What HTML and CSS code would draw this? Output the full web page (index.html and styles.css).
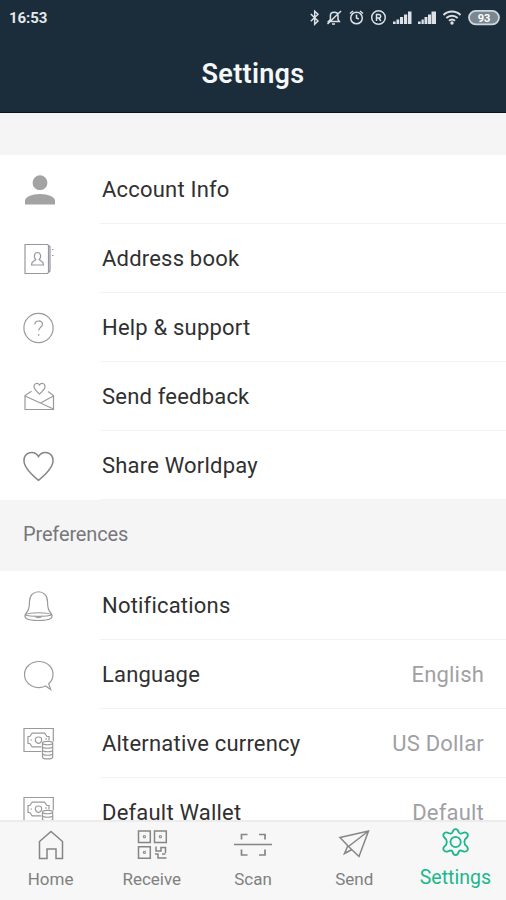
FILE: index.html
```html
<!DOCTYPE html>
<html lang="en">
<head>
<meta charset="utf-8">
<title>Settings</title>
<link rel="stylesheet" href="styles.css">
</head>
<body>
<svg class="defs" aria-hidden="true">
  <symbol id="money" viewBox="0 0 37 37">
    <path d="M21.5 26.500H4v-23h29.300v13M8 15v-3.500h1.800l2.400-3.300h12.400l2.400 3.300H29v4M8 15v3.500h1.800l2.400 3.300h9.300"/>
    <path d="M18.500 12c-2.400 0-3.500 1.300-3.100 3.300.4 1.900 1.600 3 3.100 3s2.700-1.100 3.100-3c.4-2-.7-3.300-3.100-3.300zM10.500 15h1.500M25 14h2"/>
    <path d="M22.500 18v14c0 2.600 10.200 2.600 10.200 0V18c0-2.300-10.200-2.300-10.200 0 0 2.300 10.200 2.300 10.200 0M22.500 21.500c0 2.300 10.200 2.300 10.200 0M22.500 25c0 2.300 10.200 2.300 10.200 0M22.500 28.500c0 2.300 10.200 2.300 10.200 0"/>
  </symbol>
</svg>
<div class="screen">
  <header class="header">
    <div class="status">
      <span class="time">16:53</span>
      <svg class="status-icons" width="194" height="20" viewBox="306 8 194 20">
        <g fill="none" stroke="#dbe1e6" stroke-width="1.500">
          <path d="M310.800 14l7.200 7-3.300 3.300V11.200l3.300 3-7.200 7"/>
          <path d="M328.500 21.500h10.800l-1.300-2v-3.800c0-4.600-7.600-4.600-7.600 0v3.800zM332 24h3M327.500 24l13.500-13"/>
          <circle cx="356.500" cy="18" r="5.800"/><path d="M356.500 14.500V18l2.300 1M350 13.500l3-2.500M363 13.500l-3-2.500"/>
          <circle cx="378.500" cy="17.500" r="6.800"/><path d="M376.500 21v-6.500h2.500c2.300 0 2.300 3.500 0 3.500h-2.500m2.300 0l2 3"/>
          <path stroke-width="1.900" d="M443.500 15c4.800-4.600 12.200-4.600 17 0M446.300 18c3.300-3 8.100-3 11.400 0M449 20.800c1.800-1.600 4.200-1.600 6 0"/>
        </g>
        <g fill="#dbe1e6">
          <path d="M393 21.500h2.700V24H393zM396.500 19.500h2.700V24h-2.700zM400 17h3.100v7H400zM404 14.500h3.200V24H404zM408 11.500h3.500V24H408z"/>
          <path d="M418 21.500h2.700V24H418zM421.500 19.500h2.300V24h-2.300zM424.500 17h2.900v7h-2.900zM428 14.500h3V24h-3zM431.500 11.500h4.500V24h-4.500z"/>
          <circle cx="452" cy="23" r="1.700"/>
        </g>
        <rect x="469" y="10.800" width="30" height="13.600" rx="6.800" fill="#7b8790" stroke="#cfd6dc" stroke-width="1.800"/>
        <text x="484" y="21.600" class="battery">93</text>
      </svg>
    </div>
    <h1 class="title">Settings</h1>
  </header>
  <main class="content">
    <div class="spacer"></div>
    <ul class="list">
      <li class="row">
        <svg class="icon solid" viewBox="0 0 37 37"><circle cx="20" cy="11.700" r="7.400"/><path d="M5 33.500V30c0-4 6.500-7 15-7s15 3 15 7v3.500z"/></svg>
        <div class="cell"><span>Account Info</span></div>
      </li>
      <li class="row">
        <svg class="icon book" viewBox="0 0 37 37"><path d="M5 4.500h22.500l2.500 2V31l-2.500 2.500H5zM28.500 6v26"/><path d="M32 9.500h1.500M32 15.500h1.500"/><path d="M15.800 19.500c-2.500-2.500-1.500-7 1.700-7s4.200 4.500 1.700 7c1.800 2.200 4.300 1.500 4.300 5.500h-12c0-4 2.500-3.300 4.300-5.500z"/></svg>
        <div class="cell"><span>Address book</span></div>
      </li>
      <li class="row">
        <svg class="icon" viewBox="0 0 37 37"><circle cx="18.500" cy="19" r="14.600"/><path d="M14.800 15.500c.2-4.600 7.700-4.700 7.700-.3 0 3.200-3.700 2.900-3.700 6.300M18.700 25v1.800"/></svg>
        <div class="cell"><span>Help &amp; support</span></div>
      </li>
      <li class="row">
        <svg class="icon" viewBox="0 0 37 37"><path d="M11.500 13.200L5 17.500v14h28.500v-14l-5.500-4M5 18l28.500 13M33.500 18l-13 7"/><path d="M19.500 16c-3.500-3-5.500-5-5.500-7.500 0-3.500 4-4 5.500-1.500 1.500-2.500 5.500-2 5.500 1.500 0 2.500-2 4.500-5.500 7.500z"/></svg>
        <div class="cell"><span>Send feedback</span></div>
      </li>
      <li class="row">
        <svg class="icon bold" viewBox="0 0 37 37"><path d="M18.500 33.300C9 25.500 4 19.500 4 13.700 4 5.200 14 2.500 18.500 9.500 23 2.500 33 5.200 33 13.700c0 5.800-5 11.800-14.500 19.600z"/></svg>
        <div class="cell"><span>Share Worldpay</span></div>
      </li>
    </ul>
    <h2 class="section">Preferences</h2>
    <ul class="list">
      <li class="row">
        <svg class="icon" viewBox="0 0 37 37"><path d="M9.500 14.500c0-13 18-13 18 0 0 8 1.800 9.800 4 12.500 1.800 4-.5 6.500-13 6.500s-14.800-2.500-13-6.500c2.200-2.700 4-4.500 4-12.500z"/><path d="M5.500 28c2-3 24-3 26 0-4 1.800-22 1.800-26 0zM15 28.500c.5 3 6.500 3 7 0"/></svg>
        <div class="cell"><span>Notifications</span></div>
      </li>
      <li class="row">
        <svg class="icon" viewBox="0 0 37 37"><path d="M25.500 30c-9.500 4.500-21-1.500-21-11.500 0-7.500 6.300-13 14.500-13s14 5.500 14 13c0 3.700-1.700 7-4.300 9.200l2 5.800z"/></svg>
        <div class="cell"><span>Language</span><span class="value">English</span></div>
      </li>
      <li class="row">
        <svg class="icon"><use href="#money"/></svg>
        <div class="cell"><span>Alternative currency</span><span class="value">US Dollar</span></div>
      </li>
      <li class="row">
        <svg class="icon"><use href="#money"/></svg>
        <div class="cell"><span>Default Wallet</span><span class="value">Default</span></div>
      </li>
    </ul>
  </main>
  <nav class="tabs">
    <a class="tab">
      <svg class="tab-icon" viewBox="0 0 40 36"><path d="M8.500 15.500L20 5.500l11.500 10v17H25v-9.500h-9v9.500H8.500z"/></svg>
      <span>Home</span>
    </a>
    <a class="tab">
      <svg class="tab-icon" viewBox="0 0 40 36"><path d="M6.500 5h11.800v11.500H6.500zM22.500 5h11.800v11.500H22.500zM6.500 20.700h11.800v11.500H6.500z"/><path d="M11.400 9.700h2v2h-2zM27.400 9.700h2v2h-2zM11.400 25.400h2v2h-2z" stroke-width="1"/><path d="M24 20.500v4.500h5v-3.500h4.500v5.500M23 28h3v4h8.500M30 28h3.500"/></svg>
      <span>Receive</span>
    </a>
    <a class="tab">
      <svg class="tab-icon" viewBox="0 0 40 36"><path d="M1 18.500h38" stroke-width="1.700"/><path d="M8.500 13.500v-5h6M26 8.500h6v5M8.500 23.500V29h6M26 29h6v-5.500" stroke-width="1.700"/></svg>
      <span>Scan</span>
    </a>
    <a class="tab">
      <svg class="tab-icon" viewBox="0 0 40 36"><path d="M6 11.500L34.500 5 25 30.500l-10.500-10zM34.500 5l-20 15.500M14 19.500l-3.500 8 7.500-4"/></svg>
      <span>Send</span>
    </a>
    <a class="tab active">
      <svg class="tab-icon" viewBox="0 0 40 36"><g transform="translate(1.600 -.1) scale(.95)"><circle cx="20" cy="17" r="5.400"/><path d="M16.900 6.500q.6-3.200 3.100-3.200t3.100 3.200q.7 2 3 1.500l2.600-1q2.700-.5 3.900 1.500 1 2.300-1.100 4.200l-1.500 1.300q-1.600 3 0 6l1.500 1.300q2.100 1.900 1.100 4.200-1.200 2-3.900 1.500l-2.600-1q-2.300-.5-3 1.500-.6 3.200-3.100 3.200t-3.100-3.200q-.7-2-3-1.500l-2.600 1q-2.700.5-3.900-1.500-1-2.300 1.100-4.200L10 20q1.600-3 0-6l-1.500-1.300q-2.100-1.900-1.100-4.200Q8.600 6.500 11.300 7l2.600 1q2.300.5 3-1.500z"/></g></svg>
      <span>Settings</span>
    </a>
  </nav>
</div>
</body>
</html>
```
FILE: styles.css
```css
* { box-sizing: border-box; }
body {
  margin: 0;
  font-family: Roboto, "Liberation Sans", sans-serif;
  color: #303030;
}
.defs { display: none; }
.screen {
  display: flex;
  flex-direction: column;
  width: 506px;
  height: 900px;
  overflow: hidden;
  background: #fff;
}
.header {
  flex: none;
  height: 113px;
  background: #1b2c3a;
  border-bottom: 1px solid #0b141d;
  color: #f5f7f8;
}
.status {
  display: flex;
  justify-content: space-between;
  align-items: center;
  height: 36px;
  padding: 0 6px 0 9px;
}
.time {
  font-size: 15px;
  font-weight: 700;
  letter-spacing: -0.1px;
  color: #e3e8ec;
}
.battery {
  font-size: 11px;
  font-weight: 700;
  fill: #fff;
  text-anchor: middle;
}
.title {
  margin: 21px 0 0;
  font-size: 27px;
  line-height: 34px;
  font-weight: 600;
  letter-spacing: 0.3px;
  text-align: center;
}
.content {
  flex: 1;
  min-height: 0;
  overflow: hidden;
}
.spacer {
  height: 42px;
  background: #f5f5f5;
}
.list {
  margin: 0;
  padding: 0;
  list-style: none;
}
.row {
  display: flex;
  align-items: center;
  height: 69px;
  padding-left: 20px;
}
.icon {
  flex: none;
  width: 37px;
  height: 37px;
  margin-right: 43px;
  fill: none;
  stroke: #9a9a9c;
  stroke-width: 1.2;
}
.icon.solid { fill: #a3a3a3; stroke: none; }
.icon.book { stroke: #9798a0; }
.icon.bold { stroke: #858585; stroke-width: 1.5; }
.cell {
  flex: 1;
  display: flex;
  align-items: center;
  justify-content: space-between;
  height: 69px;
  padding: 0 22px 0 2px;
  border-bottom: 1px solid #f3f3f3;
  font-size: 22px;
  letter-spacing: 0.2px;
}
.value { color: #a0a0a4; }
.section {
  margin: 0;
  height: 71px;
  padding: 0 23px;
  background: #f5f5f5;
  color: #77777c;
  font-size: 20px;
  font-weight: 400;
  line-height: 69px;
  letter-spacing: -0.15px;
}
.tabs {
  flex: none;
  display: grid;
  grid-template-columns: repeat(5, 1fr);
  height: 80px;
  background: #f7f7f7;
  border-top: 2px solid #ececec;
}
.tab {
  display: flex;
  flex-direction: column;
  align-items: center;
  padding-top: 4px;
  color: #808080;
  font-size: 17px;
  line-height: 24px;
}
.tab-icon {
  flex: none;
  width: 40px;
  height: 36px;
  margin-bottom: 5px;
  fill: none;
  stroke: #858585;
  stroke-width: 1.5;
}
.active { color: #1cb78b; font-size: 19.5px; }
.active .tab-icon { margin-bottom: 4px; stroke: #1cb78b; stroke-width: 1.9; }
```
